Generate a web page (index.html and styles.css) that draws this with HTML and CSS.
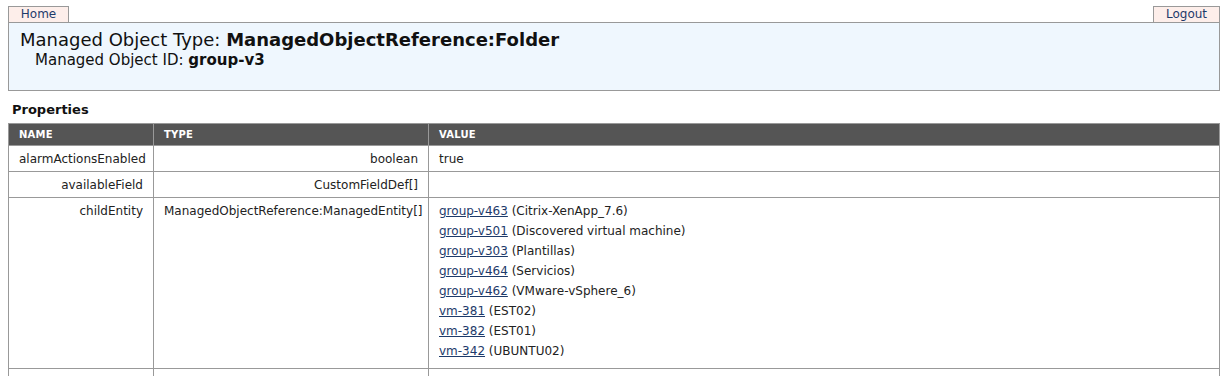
FILE: index.html
```html
<!DOCTYPE html>
<html>
<head>
<meta charset="utf-8">
<link rel="stylesheet" href="styles.css">
</head>
<body>
<div class="page">
  <div class="tabs">
    <a class="tab tab-home" href="#">Home</a>
    <a class="tab tab-logout" href="#">Logout</a>
  </div>
  <div class="header">
    <div class="title">Managed Object Type: <b>ManagedObjectReference:Folder</b></div>
    <div class="subtitle">Managed Object ID: <b>group-v3</b></div>
  </div>
  <div class="section-title">Properties</div>
  <table class="props">
    <thead>
      <tr><th class="c-name">Name</th><th class="c-type">Type</th><th class="c-value">Value</th></tr>
    </thead>
    <tbody>
      <tr class="row">
        <td class="c-name">alarmActionsEnabled</td>
        <td class="c-type">boolean</td>
        <td class="c-value">true</td>
      </tr>
      <tr class="row">
        <td class="c-name">availableField</td>
        <td class="c-type">CustomFieldDef[]</td>
        <td class="c-value"></td>
      </tr>
      <tr class="row row-top">
        <td class="c-name">childEntity</td>
        <td class="c-type">ManagedObjectReference:ManagedEntity[]</td>
        <td class="c-value">
          <ul class="refs">
            <li><a href="#">group-v463</a> (Citrix-XenApp_7.6)</li>
            <li><a href="#">group-v501</a> (Discovered virtual machine)</li>
            <li><a href="#">group-v303</a> (Plantillas)</li>
            <li><a href="#">group-v464</a> (Servicios)</li>
            <li><a href="#">group-v462</a> (VMware-vSphere_6)</li>
            <li><a href="#">vm-381</a> (EST02)</li>
            <li><a href="#">vm-382</a> (EST01)</li>
            <li><a href="#">vm-342</a> (UBUNTU02)</li>
          </ul>
        </td>
      </tr>
      <tr class="row"><td class="c-name">&nbsp;</td><td class="c-type">&nbsp;</td><td class="c-value">&nbsp;</td></tr>
    </tbody>
  </table>
</div>
</body>
</html>
```

FILE: styles.css
```css
html, body {
  margin: 0;
  padding: 0;
  background: #ffffff;
}
body {
  font-family: "DejaVu Sans", Verdana, sans-serif;
  font-size: 12px;
  color: #222222;
}
.page {
  padding: 6px 0 0 8px;
  width: 1212px;
}
.tabs {
  display: flex;
  justify-content: space-between;
}
.tab {
  display: block;
  height: 15px;
  line-height: 15px;
  border: 1px solid #999999;
  border-bottom: none;
  background: #fdeeea;
  color: #1d3a6a;
  text-decoration: none;
  text-align: center;
  font-size: 12px;
}
.tab-home { width: 59px; }
.tab-logout { width: 65px; }
.header {
  border: 1px solid #999999;
  background: #eff7fe;
  height: 67px;
  padding: 0 11px;
}
.title {
  font-size: 18px;
  color: #111111;
  margin-top: 6px;
  line-height: 22px;
}
.subtitle {
  font-size: 15px;
  color: #111111;
  padding-left: 15px;
  line-height: 18px;
}
.section-title {
  font-weight: bold;
  font-size: 13px;
  color: #111111;
  padding: 11px 0 0 4px;
  line-height: 16px;
  height: 21px;
}
.props {
  border-collapse: collapse;
  width: 1212px;
  table-layout: fixed;
}
.props th {
  background: #555555;
  color: #ffffff;
  font-size: 10px;
  font-weight: bold;
  text-transform: uppercase;
  text-align: left;
  height: 21px;
  padding: 0 10px;
  border: 1px solid #999999;
  letter-spacing: 0.2px;
}
.props th.c-name { width: 124px; }
.props th.c-type { width: 254px; }
.props td {
  border: 1px solid #999999;
  padding: 0 10px;
  height: 25px;
  color: #222222;
  font-size: 12px;
  vertical-align: middle;
}
.props td.c-name,
.props td.c-type {
  text-align: right;
}
.props td.c-value {
  text-align: left;
}
.row-top td {
  vertical-align: top;
  padding-top: 5px;
  line-height: 16px;
}
.row-top td.c-value {
  padding-top: 3px;
  padding-bottom: 7px;
}
.refs {
  list-style: none;
  margin: 0;
  padding: 0;
}
.refs li {
  line-height: 20px;
}
.refs a {
  color: #1d3a6a;
  text-decoration: underline;
}
```
